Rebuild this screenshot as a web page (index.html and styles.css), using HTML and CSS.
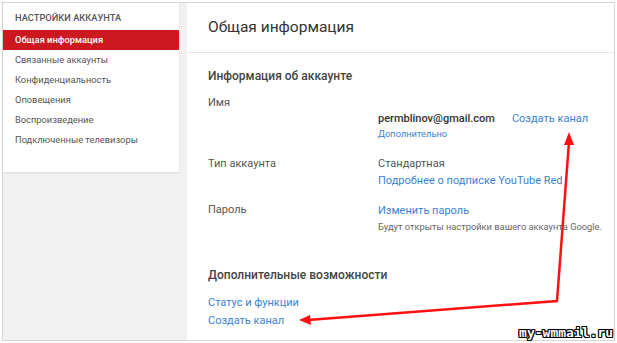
FILE: index.html
```html
<!DOCTYPE html>
<html lang="ru">
<head>
  <meta charset="UTF-8" />
  <title>Настройки аккаунта</title>
  <link rel="stylesheet" href="styles.css">
</head>
<body>

  <div class="frame">
    <aside class="sidebar">
      <div class="sidebar-title">Настройки аккаунта</div>
      <a class="side-link active" href="#">Общая информация</a>
      <a class="side-link" href="#">Связанные аккаунты</a>
      <a class="side-link" href="#">Конфиденциальность</a>
      <a class="side-link" href="#">Оповещения</a>
      <a class="side-link" href="#">Воспроизведение</a>
      <a class="side-link" href="#">Подключенные телевизоры</a>
    </aside>

    <main class="card">
      <header class="card-header">
        <h1>Общая информация</h1>
      </header>

      <section class="card-body">
        <h2 class="section-title">Информация об аккаунте</h2>

        <div class="row row-name">
          <div class="label">Имя</div>
          <div class="value">
            <div class="blank"></div>
            <div class="email-line">
              <span class="email">permblinov@gmail.com</span>
              <a class="link" href="#">Создать канал</a>
            </div>
            <a class="link small" href="#">Дополнительно</a>
          </div>
        </div>

        <div class="row row-type">
          <div class="label">Тип аккаунта</div>
          <div class="value">
            <div class="plain">Стандартная</div>
            <a class="link" href="#">Подробнее о подписке YouTube Red</a>
          </div>
        </div>

        <div class="row row-pass">
          <div class="label">Пароль</div>
          <div class="value">
            <a class="link" href="#">Изменить пароль</a>
            <div class="note">Будут открыты настройки вашего аккаунта Google.</div>
          </div>
        </div>

        <h2 class="section-title extra-title">Дополнительные возможности</h2>
        <div class="extra-links">
          <a class="link" href="#">Статус и функции</a>
          <a class="link" href="#">Создать канал</a>
        </div>
      </section>
    </main>
  </div>

  <!-- annotation arrows drawn over the screenshot -->
  <svg class="arrows" width="617" height="343" viewBox="0 0 617 343">
    <polyline points="569,142 557,301 308,320" fill="none" stroke="#ff1010" stroke-width="2.5" stroke-linejoin="miter" />
    <polygon points="569,132 564,145 574,145" fill="#ff1010" />
    <polygon points="299,320 310,315 311,325" fill="#ff1010" />
  </svg>

  <div class="watermark">my-wmmail.ru</div>

</body>
</html>
```

FILE: styles.css
```css
:root {
  --frame-bg: #f1f1f1;
  --border: #d6d6d6;
  --line: #e8e8e8;
  --red: #cc181e;
  --text: #333;
  --muted: #555;
  --link: #3b82d0;
  --font-stack: Roboto, "Liberation Sans", Arial, sans-serif;
}

* {
  margin: 0;
  padding: 0;
  box-sizing: border-box;
}

body {
  font-family: var(--font-stack);
  background-color: #fff;
  color: var(--text);
  width: 617px;
  height: 343px;
  overflow: hidden;
  position: relative;
}

a {
  text-decoration: none;
}

.frame {
  margin: 2px 0 0 2px;
  width: 613px;
  height: 339px;
  border: 1px solid var(--border);
  background-color: var(--frame-bg);
  display: flex;
  align-items: flex-start;
  gap: 8px;
}

/* left menu */
.sidebar {
  width: 176px;
  background-color: #fff;
  padding: 7px 0 22px;
  display: flex;
  flex-direction: column;
  box-shadow: 0 1px 2px rgba(0, 0, 0, 0.1);
}

.sidebar-title {
  font-size: 9.3px;
  font-weight: 500;
  text-transform: uppercase;
  color: var(--muted);
  line-height: 16px;
  padding-left: 12px;
  margin-bottom: 4px;
}

.side-link {
  display: block;
  font-size: 9.3px;
  line-height: 20px;
  color: #555;
  padding-left: 12px;
}

.side-link.active {
  background-color: var(--red);
  color: #fff;
  font-weight: 500;
}

/* main card */
.card {
  flex: 1;
  height: 100%;
  background-color: #fff;
}

.card-header {
  height: 50px;
  border-bottom: 1px solid var(--line);
  padding-left: 21px;
}

.card-header h1 {
  font-size: 15.5px;
  font-weight: 400;
  line-height: 49px;
  color: var(--text);
}

.card-body {
  padding: 13px 0 0 21px;
}

.section-title {
  font-size: 12px;
  font-weight: 500;
  line-height: 20px;
  color: #444;
}

.row {
  display: grid;
  grid-template-columns: 170px 1fr;
  font-size: 11px;
}

.row-name {
  margin-top: 9px;
}

.row-type {
  margin-top: 16px;
}

.row-pass {
  margin-top: 13px;
}

.label {
  color: var(--muted);
  line-height: 16px;
}

.value {
  display: flex;
  flex-direction: column;
  align-items: flex-start;
}

.blank {
  height: 16px;
}

.email-line {
  display: flex;
  gap: 17px;
  line-height: 16px;
}

.email {
  font-weight: 500;
  color: #333;
}

.link {
  color: var(--link);
  font-size: 11px;
  line-height: 17px;
}

.link.small {
  font-size: 9.3px;
  line-height: 13px;
}

.email-line .link {
  line-height: 16px;
}

.plain {
  color: var(--muted);
  line-height: 16px;
}

.note {
  font-size: 9.3px;
  color: #666;
  line-height: 16px;
}

.extra-title {
  margin-top: 30px;
}

.extra-links {
  margin-top: 9px;
  display: flex;
  flex-direction: column;
  align-items: flex-start;
}

.extra-links .link {
  line-height: 18px;
}

/* overlays */
.arrows {
  position: absolute;
  left: 0;
  top: 0;
}

.watermark {
  position: absolute;
  right: 4px;
  bottom: 3px;
  font-family: "DejaVu Sans Mono", monospace;
  font-weight: bold;
  font-size: 13px;
  line-height: 14px;
  color: #fff;
  text-shadow: 1px 0 #000, -1px 0 #000, 0 1px #000, 0 -1px #000,
    1px 1px #000, -1px -1px #000, 1px -1px #000, -1px 1px #000;
}
```
